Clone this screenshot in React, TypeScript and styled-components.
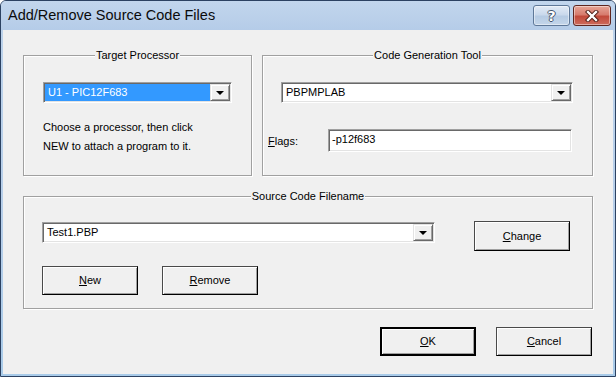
import React from "react";
import styled, { createGlobalStyle } from "styled-components";

const GlobalStyle = createGlobalStyle`
  html, body {
    margin: 0;
    padding: 0;
    background: #ffffff;
  }
  * {
    box-sizing: border-box;
  }
`;

const Window = styled.div`
  width: 616px;
  height: 377px;
  border: 1px solid #2c4262;
  border-radius: 6px 6px 0 0;
  background: linear-gradient(to bottom, #bdd3eb 0%, #b6cee9 60%, #a9cbe9 100%);
  display: flex;
  flex-direction: column;
  overflow: hidden;
  font-family: "Liberation Sans", Arial, sans-serif;
  font-size: 11px;
  color: #000;
`;

const TitleBar = styled.div`
  height: 29px;
  flex: none;
  display: flex;
  align-items: flex-start;
  padding: 0 4px 0 7px;
  background: linear-gradient(to bottom, #c2d6ed, #b5cce8);
`;

const Title = styled.div`
  flex: 1;
  font-size: 14.5px;
  line-height: 29px;
  color: #0b0b0b;
  white-space: nowrap;
`;

const CaptionButtons = styled.div`
  display: flex;
  gap: 3px;
  margin-top: 4px;
`;

const CaptionButton = styled.div<{ $close?: boolean }>`
  width: ${(p) => (p.$close ? 38 : 37)}px;
  height: 21px;
  border-radius: 3px;
  border: 1px solid ${(p) => (p.$close ? "#5e2620" : "#5f7898")};
  background: ${(p) =>
    p.$close
      ? "linear-gradient(to bottom, #e6a597 0%, #d77c6e 45%, #c24a3b 55%, #cd6b5c 100%)"
      : "linear-gradient(to bottom, #e3ebf6 0%, #cad9ec 45%, #b6cbe3 55%, #c4d6ea 100%)"};
  box-shadow: inset 0 0 0 1px rgba(255, 255, 255, 0.45);
  display: flex;
  align-items: center;
  justify-content: center;
`;

const HelpGlyph = styled.span`
  font-family: "DejaVu Sans", sans-serif;
  font-weight: bold;
  font-size: 14px;
  line-height: 1;
  color: #fff;
  text-shadow: 1px 0 0 #44536a, -1px 0 0 #44536a, 0 1px 0 #44536a, 0 -1px 0 #44536a;
`;

const Client = styled.div`
  flex: 1;
  margin: 0 2px 2px 2px;
  background: #f0f0f0;
  padding: 25px 20px 0 20px;
  display: flex;
  flex-direction: column;
`;

const TopRow = styled.div`
  display: flex;
  gap: 10px;
`;

const Group = styled.div<{ $w?: number; $h: number; $grow?: boolean; $mt?: number }>`
  ${(p) => (p.$w ? `width: ${p.$w}px;` : "")}
  ${(p) => (p.$grow ? "flex: 1;" : "flex: none;")}
  height: ${(p) => p.$h}px;
  margin-top: ${(p) => p.$mt ?? 0}px;
  border: 1px solid #a0a0a0;
  box-shadow: inset 1px 1px 0 #fff, 1px 1px 0 #fff;
  display: flex;
  flex-direction: column;
`;

const Legend = styled.div`
  align-self: center;
  margin-top: -7px;
  padding: 0 1px;
  line-height: 13px;
  background: #f0f0f0;
  white-space: nowrap;
`;

const GroupBody = styled.div<{ $pad: string }>`
  padding: ${(p) => p.$pad};
  display: flex;
  flex-direction: column;
`;

const Combo = styled.div<{ $w: number; $ml?: number; $mt?: number }>`
  width: ${(p) => p.$w}px;
  height: 21px;
  margin-left: ${(p) => p.$ml ?? 0}px;
  margin-top: ${(p) => p.$mt ?? 0}px;
  background: #fff;
  border: 1px solid;
  border-color: #a0a0a0 #fff #fff #a0a0a0;
  box-shadow: inset 1px 1px 0 #696969, inset -1px -1px 0 #e3e3e3;
  padding: 1px;
  display: flex;
`;

const ComboText = styled.div<{ $selected?: boolean }>`
  flex: 1;
  padding-left: 3px;
  line-height: 17px;
  background: ${(p) => (p.$selected ? "#3399ff" : "transparent")};
  color: ${(p) => (p.$selected ? "#fff" : "#000")};
  white-space: nowrap;
`;

const DropButton = styled.div`
  width: 20px;
  background: #f0f0f0;
  border: 1px solid;
  border-color: #e3e3e3 #696969 #696969 #e3e3e3;
  box-shadow: inset 1px 1px 0 #fff, inset -1px -1px 0 #a0a0a0;
  display: flex;
  align-items: center;
  justify-content: center;

  &::after {
    content: "";
    width: 0;
    height: 0;
    border-left: 4px solid transparent;
    border-right: 4px solid transparent;
    border-top: 4px solid #000;
    margin-top: 1px;
  }
`;

const Hint = styled.div`
  margin-top: 15px;
  line-height: 19px;
`;

const FieldRow = styled.div`
  display: flex;
  align-items: center;
  margin-top: 26px;
`;

const Label = styled.div`
  width: 60px;
`;

const TextBox = styled.div<{ $w: number }>`
  width: ${(p) => p.$w}px;
  height: 23px;
  background: #fff;
  border: 1px solid;
  border-color: #a0a0a0 #fff #fff #a0a0a0;
  box-shadow: inset 1px 1px 0 #696969, inset -1px -1px 0 #e3e3e3;
  padding-left: 3px;
  line-height: 19px;
`;

const Row = styled.div<{ $gap: number; $mt?: number }>`
  display: flex;
  align-items: flex-start;
  gap: ${(p) => p.$gap}px;
  margin-top: ${(p) => p.$mt ?? 0}px;
`;

const Button = styled.div<{ $default?: boolean; $h?: number }>`
  width: 96px;
  height: ${(p) => p.$h ?? 30}px;
  background: #f0f0f0;
  border: ${(p) => (p.$default ? "2px solid #000" : "1px solid")};
  ${(p) => (p.$default ? "" : "border-color: #4a4a4a #000 #000 #4a4a4a;")}
  box-shadow: inset 1px 1px 0 #fff, inset -1px -1px 0 #a0a0a0;
  display: flex;
  align-items: center;
  justify-content: center;
  line-height: 13px;
`;

const Footer = styled.div`
  display: flex;
  justify-content: flex-end;
  gap: 20px;
  margin-top: 18px;
  padding-right: 1px;
`;

const CloseIcon = () => (
  <svg width="14" height="12" viewBox="0 0 14 12">
    <path d="M3 2 L11 10 M11 2 L3 10" stroke="#4a1812" strokeWidth="4.2" strokeLinecap="square" />
    <path d="M3 2 L11 10 M11 2 L3 10" stroke="#fff" strokeWidth="2.4" strokeLinecap="square" />
  </svg>
);

export default function App() {
  return (
    <>
      <GlobalStyle />
      <Window>
        <TitleBar>
          <Title>Add/Remove Source Code Files</Title>
          <CaptionButtons>
            <CaptionButton>
              <HelpGlyph>?</HelpGlyph>
            </CaptionButton>
            <CaptionButton $close>
              <CloseIcon />
            </CaptionButton>
          </CaptionButtons>
        </TitleBar>
        <Client>
          <TopRow>
            <Group $w={229} $h={121}>
              <Legend>Target Processor</Legend>
              <GroupBody $pad="20px 0 0 19px">
                <Combo $w={189}>
                  <ComboText $selected>U1 - PIC12F683</ComboText>
                  <DropButton />
                </Combo>
                <Hint>
                  Choose a processor, then click
                  <br />
                  NEW to attach a program to it.
                </Hint>
              </GroupBody>
            </Group>
            <Group $grow $h={121}>
              <Legend>Code Generation Tool</Legend>
              <GroupBody $pad="20px 0 0 5px">
                <Combo $w={292} $ml={13}>
                  <ComboText>PBPMPLAB</ComboText>
                  <DropButton />
                </Combo>
                <FieldRow>
                  <Label>
                    <u>F</u>lags:
                  </Label>
                  <TextBox $w={244}>-p12f683</TextBox>
                </FieldRow>
              </GroupBody>
            </Group>
          </TopRow>
          <Group $h={113} $mt={20}>
            <Legend>Source Code Filename</Legend>
            <GroupBody $pad="18px 0 0 18px">
              <Row $gap={39}>
                <Combo $w={393} $mt={1}>
                  <ComboText>Test1.PBP</ComboText>
                  <DropButton />
                </Combo>
                <Button>
                  <span>
                    <u>C</u>hange
                  </span>
                </Button>
              </Row>
              <Row $gap={24} $mt={15}>
                <Button $h={29}>
                  <span>
                    <u>N</u>ew
                  </span>
                </Button>
                <Button $h={29}>
                  <span>
                    <u>R</u>emove
                  </span>
                </Button>
              </Row>
            </GroupBody>
          </Group>
          <Footer>
            <Button $default $h={29}>
              <span>
                <u>O</u>K
              </span>
            </Button>
            <Button $h={29}>
              <span>
                <u>C</u>ancel
              </span>
            </Button>
          </Footer>
        </Client>
      </Window>
    </>
  );
}
